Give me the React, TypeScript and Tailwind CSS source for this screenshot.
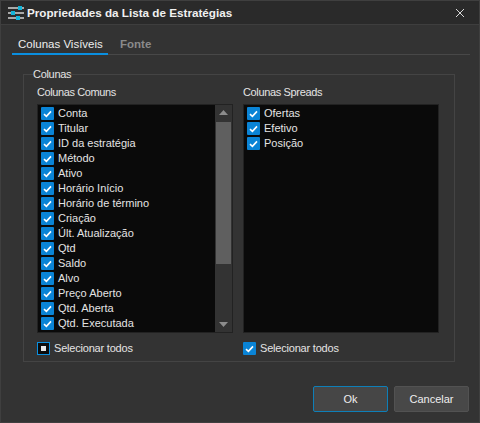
import React from 'react';

const comuns = ['Conta', 'Titular', 'ID da estratégia', 'Método', 'Ativo', 'Horário Início', 'Horário de término', 'Criação', 'Últ. Atualização', 'Qtd', 'Saldo', 'Alvo', 'Preço Aberto', 'Qtd. Aberta', 'Qtd. Executada'];
const spreads = ['Ofertas', 'Efetivo', 'Posição'];

function Check() {
  return (
    <span className="flex h-[13px] w-[13px] shrink-0 items-center justify-center rounded-[1px] bg-[#0a84d6]">
      <svg width="9" height="8" viewBox="0 0 9 8" fill="none">
        <path d="M1 4.2 L3.4 6.4 L8 1.4" stroke="#fff" strokeWidth="1.6" />
      </svg>
    </span>
  );
}

function Row({ label }: { label: string }) {
  return (
    <div className="flex h-[15px] items-center gap-[4px]">
      <Check />
      <span className="whitespace-nowrap">{label}</span>
    </div>
  );
}

function AppIcon() {
  return (
    <svg width="17" height="16" viewBox="0 0 17 16" className="shrink-0">
      <rect x="0" y="2" width="16" height="2" fill="#a8a8a8" />
      <rect x="0" y="7" width="16" height="2" fill="#a8a8a8" />
      <rect x="0" y="12" width="16" height="2" fill="#a8a8a8" />
      <rect x="10" y="1" width="4" height="4" fill="#12b4d8" />
      <rect x="3" y="6" width="4" height="4" fill="#12b4d8" />
      <rect x="8" y="11" width="4" height="4" fill="#12b4d8" />
    </svg>
  );
}

export default function App() {
  return (
    <div className="flex h-[423px] w-[480px] flex-col overflow-hidden border border-[#3f3f3f] bg-[#333333] text-[11px] text-[#e4e4e4] [font-family:'Liberation_Sans',sans-serif]">
      {/* title bar */}
      <div className="flex h-[24px] shrink-0 items-center border-b border-[#3e3e3e] bg-[#2a2a2a] pl-[7px] pr-[14px]">
        <AppIcon />
        <span className="ml-[2px] text-[11.7px] font-bold text-[#f0f0f0]">Propriedades da Lista de Estratégias</span>
        <svg width="10" height="10" viewBox="0 0 10 10" className="ml-auto">
          <path d="M1 1 L9 9 M9 1 L1 9" stroke="#d8d8d8" strokeWidth="1" />
        </svg>
      </div>

      {/* tabs */}
      <div className="mx-[11px] mr-[9px] mt-[11px] flex h-[19px] shrink-0 border-b border-[#484848]">
        <div className="-mb-px w-[96px] border-b-2 border-[#0a8fe0] pl-[6px] text-[11.5px] text-[#eeeeee]">Colunas Visíveis</div>
        <div className="pl-[12px] text-[11.5px] font-bold text-[#8a8a8a]">Fonte</div>
      </div>

      {/* group */}
      <fieldset className="mx-[22px] mr-[24px] mt-[12px] h-[295px] border border-[#444444] px-[13px]">
        <legend className="ml-[-4px] leading-[14px] tracking-[-0.3px]">Colunas</legend>
        <div className="mt-[4px] flex gap-[10px]">
          <div className="w-[196px]">
            <div className="h-[19px] leading-[14px] tracking-[-0.4px]">Colunas Comuns</div>
            <div className="flex h-[229px] border border-[#222222] bg-[#0a0a0a] pl-[3px]">
              <div className="flex-1 pt-[1px]">
                {comuns.map((c) => <Row key={c} label={c} />)}
              </div>
              <div className="flex w-[17px] flex-col items-center bg-[#333333] py-[5px]">
                <svg width="9" height="5" viewBox="0 0 9 5"><path d="M4.5 0 L9 5 H0 Z" fill="#8c8c8c" /></svg>
                <div className="mt-[7px] h-[142px] w-[15px] bg-[#5f5f5f]" />
                <svg width="9" height="5" viewBox="0 0 9 5" className="mt-auto"><path d="M0 0 H9 L4.5 5 Z" fill="#8c8c8c" /></svg>
              </div>
            </div>
            <div className="mt-[8px] flex h-[15px] items-center gap-[4px]">
              <span className="flex h-[13px] w-[13px] items-center justify-center border border-[#0a8fe0] bg-[#0c0c0c]">
                <span className="h-[5px] w-[5px] bg-[#e8e8e8]" />
              </span>
              <span className="tracking-[-0.2px]">Selecionar todos</span>
            </div>
          </div>
          <div className="w-[196px]">
            <div className="h-[19px] leading-[14px] tracking-[-0.35px]">Colunas Spreads</div>
            <div className="h-[229px] border border-[#222222] bg-[#0a0a0a] pl-[3px] pt-[1px]">
              {spreads.map((s) => <Row key={s} label={s} />)}
            </div>
            <div className="mt-[8px] flex h-[15px] items-center gap-[4px]">
              <Check />
              <span className="tracking-[-0.2px]">Selecionar todos</span>
            </div>
          </div>
        </div>
      </fieldset>

      {/* buttons */}
      <div className="mr-[10px] mt-[24px] flex justify-end gap-[6px]">
        <button className="h-[26px] w-[75px] rounded-[2px] border border-[#0e7fb8] bg-[#464646] text-[11px] text-[#eeeeee]">Ok</button>
        <button className="h-[26px] w-[75px] rounded-[2px] border border-[#525252] bg-[#484848] text-[11px] text-[#eeeeee]">Cancelar</button>
      </div>
    </div>
  );
}
